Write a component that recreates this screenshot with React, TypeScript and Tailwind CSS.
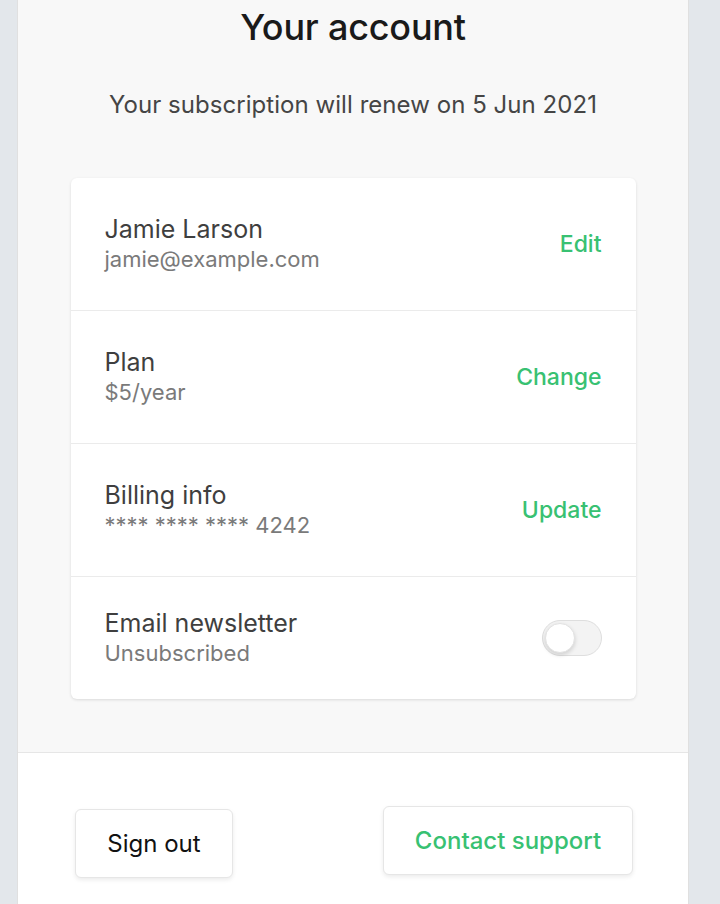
import { useState } from 'react'

const rows = [
  { title: 'Jamie Larson', sub: 'jamie@example.com', action: 'Edit' },
  { title: 'Plan', sub: '$5/year', action: 'Change' },
  { title: 'Billing info', sub: '**** **** **** 4242', action: 'Update' },
]

export default function App() {
  const [subscribed, setSubscribed] = useState(false)

  return (
    <div className="min-h-screen bg-[#e3e7eb] flex" style={{ fontFamily: 'Inter, Roboto, "Liberation Sans", sans-serif' }}>
      <div className="ml-[17px] w-[672px] min-h-screen flex flex-col border-x border-[#e0e0e0]">
        <div className="bg-[#f8f8f8] h-[753px] flex flex-col items-center border-b border-[#e6e6e6]">
          <h1 className="mt-[7px] text-[36px] leading-[40px] font-medium text-[#1a1a1a] tracking-[-0.2px]">Your account</h1>
          <p className="mt-[42px] text-[24px] leading-[32px] text-[#454545] tracking-[0.05px]">Your subscription will renew on 5 Jun 2021</p>

          <div className="mt-[57px] w-[565px] bg-white rounded-md shadow-[0_1px_3px_rgba(0,0,0,0.12)]">
            {rows.map(r => (
              <div key={r.title} className="h-[133px] flex items-center justify-between px-[34px] border-b border-[#ebebeb]">
                <div>
                  <div className="text-[25px] leading-[30px] text-[#3f3f3f]">{r.title}</div>
                  <div className="text-[22px] leading-[30px] text-[#7a7a7a]">{r.sub}</div>
                </div>
                <button className="text-[23px] font-medium text-[#38c172]">{r.action}</button>
              </div>
            ))}
            <div className="h-[122px] flex items-center justify-between px-[34px]">
              <div>
                <div className="text-[25px] leading-[30px] text-[#3f3f3f]">Email newsletter</div>
                <div className="text-[22px] leading-[30px] text-[#7a7a7a]">{subscribed ? 'Subscribed' : 'Unsubscribed'}</div>
              </div>
              <button
                onClick={() => setSubscribed(!subscribed)}
                className={`w-[60px] h-[36px] rounded-full border border-[#dedede] flex items-center px-[2px] ${subscribed ? 'bg-[#38c172] justify-end' : 'bg-[#f3f3f3] justify-start'}`}
              >
                <span className="w-[30px] h-[30px] rounded-full bg-white border border-[#e2e2e2] shadow-[0_2px_4px_rgba(0,0,0,0.15)]" />
              </button>
            </div>
          </div>
        </div>

        <div className="flex-1 bg-white flex justify-between pl-[57px] pr-[55px]">
          <button className="mt-[56px] self-start w-[158px] h-[69px] rounded-md border border-[#e6e6e6] bg-white shadow-[0_2px_4px_rgba(0,0,0,0.08)] text-[24px] text-[#111]">Sign out</button>
          <button className="mt-[53px] self-start w-[250px] h-[69px] rounded-md border border-[#e6e6e6] bg-white shadow-[0_2px_4px_rgba(0,0,0,0.08)] text-[24px] font-medium text-[#38c172]">Contact support</button>
        </div>
      </div>
    </div>
  )
}
